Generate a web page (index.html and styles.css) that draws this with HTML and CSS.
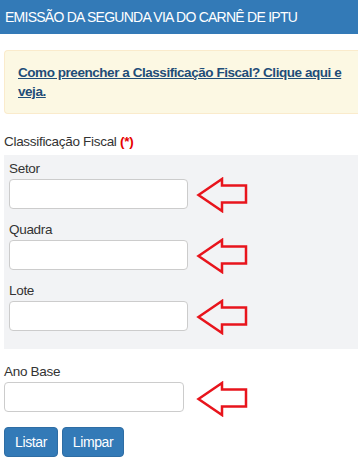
FILE: index.html
```html
<!DOCTYPE html>
<html lang="pt-BR">
<head>
<meta charset="utf-8">
<title>Emissão da Segunda Via do Carnê de IPTU</title>
<link rel="stylesheet" href="styles.css">
</head>
<body>
<header class="topbar">EMISSÃO DA SEGUNDA VIA DO CARNÊ DE IPTU</header>
<main class="content">
  <div class="alert">
    <a class="alert-link" href="#">Como preencher a Classificação Fiscal? Clique aqui e veja.</a>
  </div>
  <div class="group-title">Classificação Fiscal <span class="req">(*)</span></div>
  <div class="panel">
    <div class="field">
      <label class="label">Setor</label>
      <div class="row">
        <input class="input input-panel" type="text">
        <svg class="arrow" viewBox="0 0 52 36" width="52" height="36"><polygon points="2.5,18 26,2 26,8.5 50,8.5 50,25.5 26,25.5 26,34" /></svg>
      </div>
    </div>
    <div class="field">
      <label class="label">Quadra</label>
      <div class="row">
        <input class="input input-panel" type="text">
        <svg class="arrow" viewBox="0 0 52 36" width="52" height="36"><polygon points="2.5,18 26,2 26,8.5 50,8.5 50,25.5 26,25.5 26,34" /></svg>
      </div>
    </div>
    <div class="field field-last">
      <label class="label">Lote</label>
      <div class="row">
        <input class="input input-panel" type="text">
        <svg class="arrow" viewBox="0 0 52 36" width="52" height="36"><polygon points="2.5,18 26,2 26,8.5 50,8.5 50,25.5 26,25.5 26,34" /></svg>
      </div>
    </div>
  </div>
  <div class="field field-ano">
    <label class="label">Ano Base</label>
    <div class="row row-ano">
      <input class="input input-ano" type="text">
      <svg class="arrow" viewBox="0 0 52 36" width="52" height="36"><polygon points="2.5,18 26,2 26,8.5 50,8.5 50,25.5 26,25.5 26,34" /></svg>
    </div>
  </div>
  <div class="actions">
    <button class="btn btn-listar" type="button">Listar</button>
    <button class="btn btn-limpar" type="button">Limpar</button>
  </div>
</main>
</body>
</html>
```
FILE: styles.css
```css
* { box-sizing: border-box; }
html, body { margin: 0; padding: 0; }
body {
  font-family: "Liberation Sans", Arial, sans-serif;
  font-size: 13.5px;
  letter-spacing: -0.3px;
  color: #333;
  background: #fff;
  width: 358px;
  overflow: hidden;
}
.topbar {
  background: #337ab7;
  color: #fff;
  height: 34px;
  line-height: 34px;
  padding-left: 5px;
  font-size: 14px;
  letter-spacing: -0.75px;
  white-space: nowrap;
}
.content {
  padding-left: 4px;
}
.alert {
  margin-top: 16px;
  height: 64px;
  background: #fcf8e3;
  border: 1px solid #faebcc;
  border-right: 0;
  border-radius: 4px 0 0 4px;
  padding: 12px 8px 0 13px;
  line-height: 19px;
}
.alert-link {
  color: #1f4d78;
  font-weight: bold;
  letter-spacing: -0.45px;
  text-decoration: underline;
}
.group-title {
  margin-top: 19px;
  line-height: 18px;
  height: 22px;
}
.req {
  color: #e60000;
  font-weight: bold;
}
.panel {
  background: #f2f3f5;
  padding: 4px 0 18px 5px;
}
.field { margin-bottom: 11px; }
.field-last { margin-bottom: 0; }
.label {
  display: block;
  line-height: 20px;
  height: 20px;
}
.row {
  display: flex;
  align-items: center;
  height: 30px;
}
.input {
  height: 30px;
  border: 1px solid #ccc;
  border-radius: 4px;
  background: #fff;
  margin: 0;
  padding: 4px 8px;
  font: inherit;
}
.input-panel { width: 179px; }
.input-ano { width: 180px; }
.arrow {
  flex: none;
  margin-left: 8px;
  margin-top: 2px;
}
.row-ano .arrow { margin-left: 12px; margin-top: 4px; }
.arrow polygon {
  fill: none;
  stroke: #e8141c;
  stroke-width: 2.5;
  stroke-linejoin: miter;
}
.field-ano { margin-top: 13px; margin-bottom: 15px; }
.actions {
  display: flex;
  gap: 4px;
}
.btn {
  height: 30px;
  background: #337ab7;
  border: 1px solid #2e6da4;
  border-radius: 4px;
  color: #fff;
  font: inherit;
  font-size: 14px;
  letter-spacing: -0.4px;
  padding: 0;
}
.btn-listar { width: 54px; }
.btn-limpar { width: 62px; }
```
